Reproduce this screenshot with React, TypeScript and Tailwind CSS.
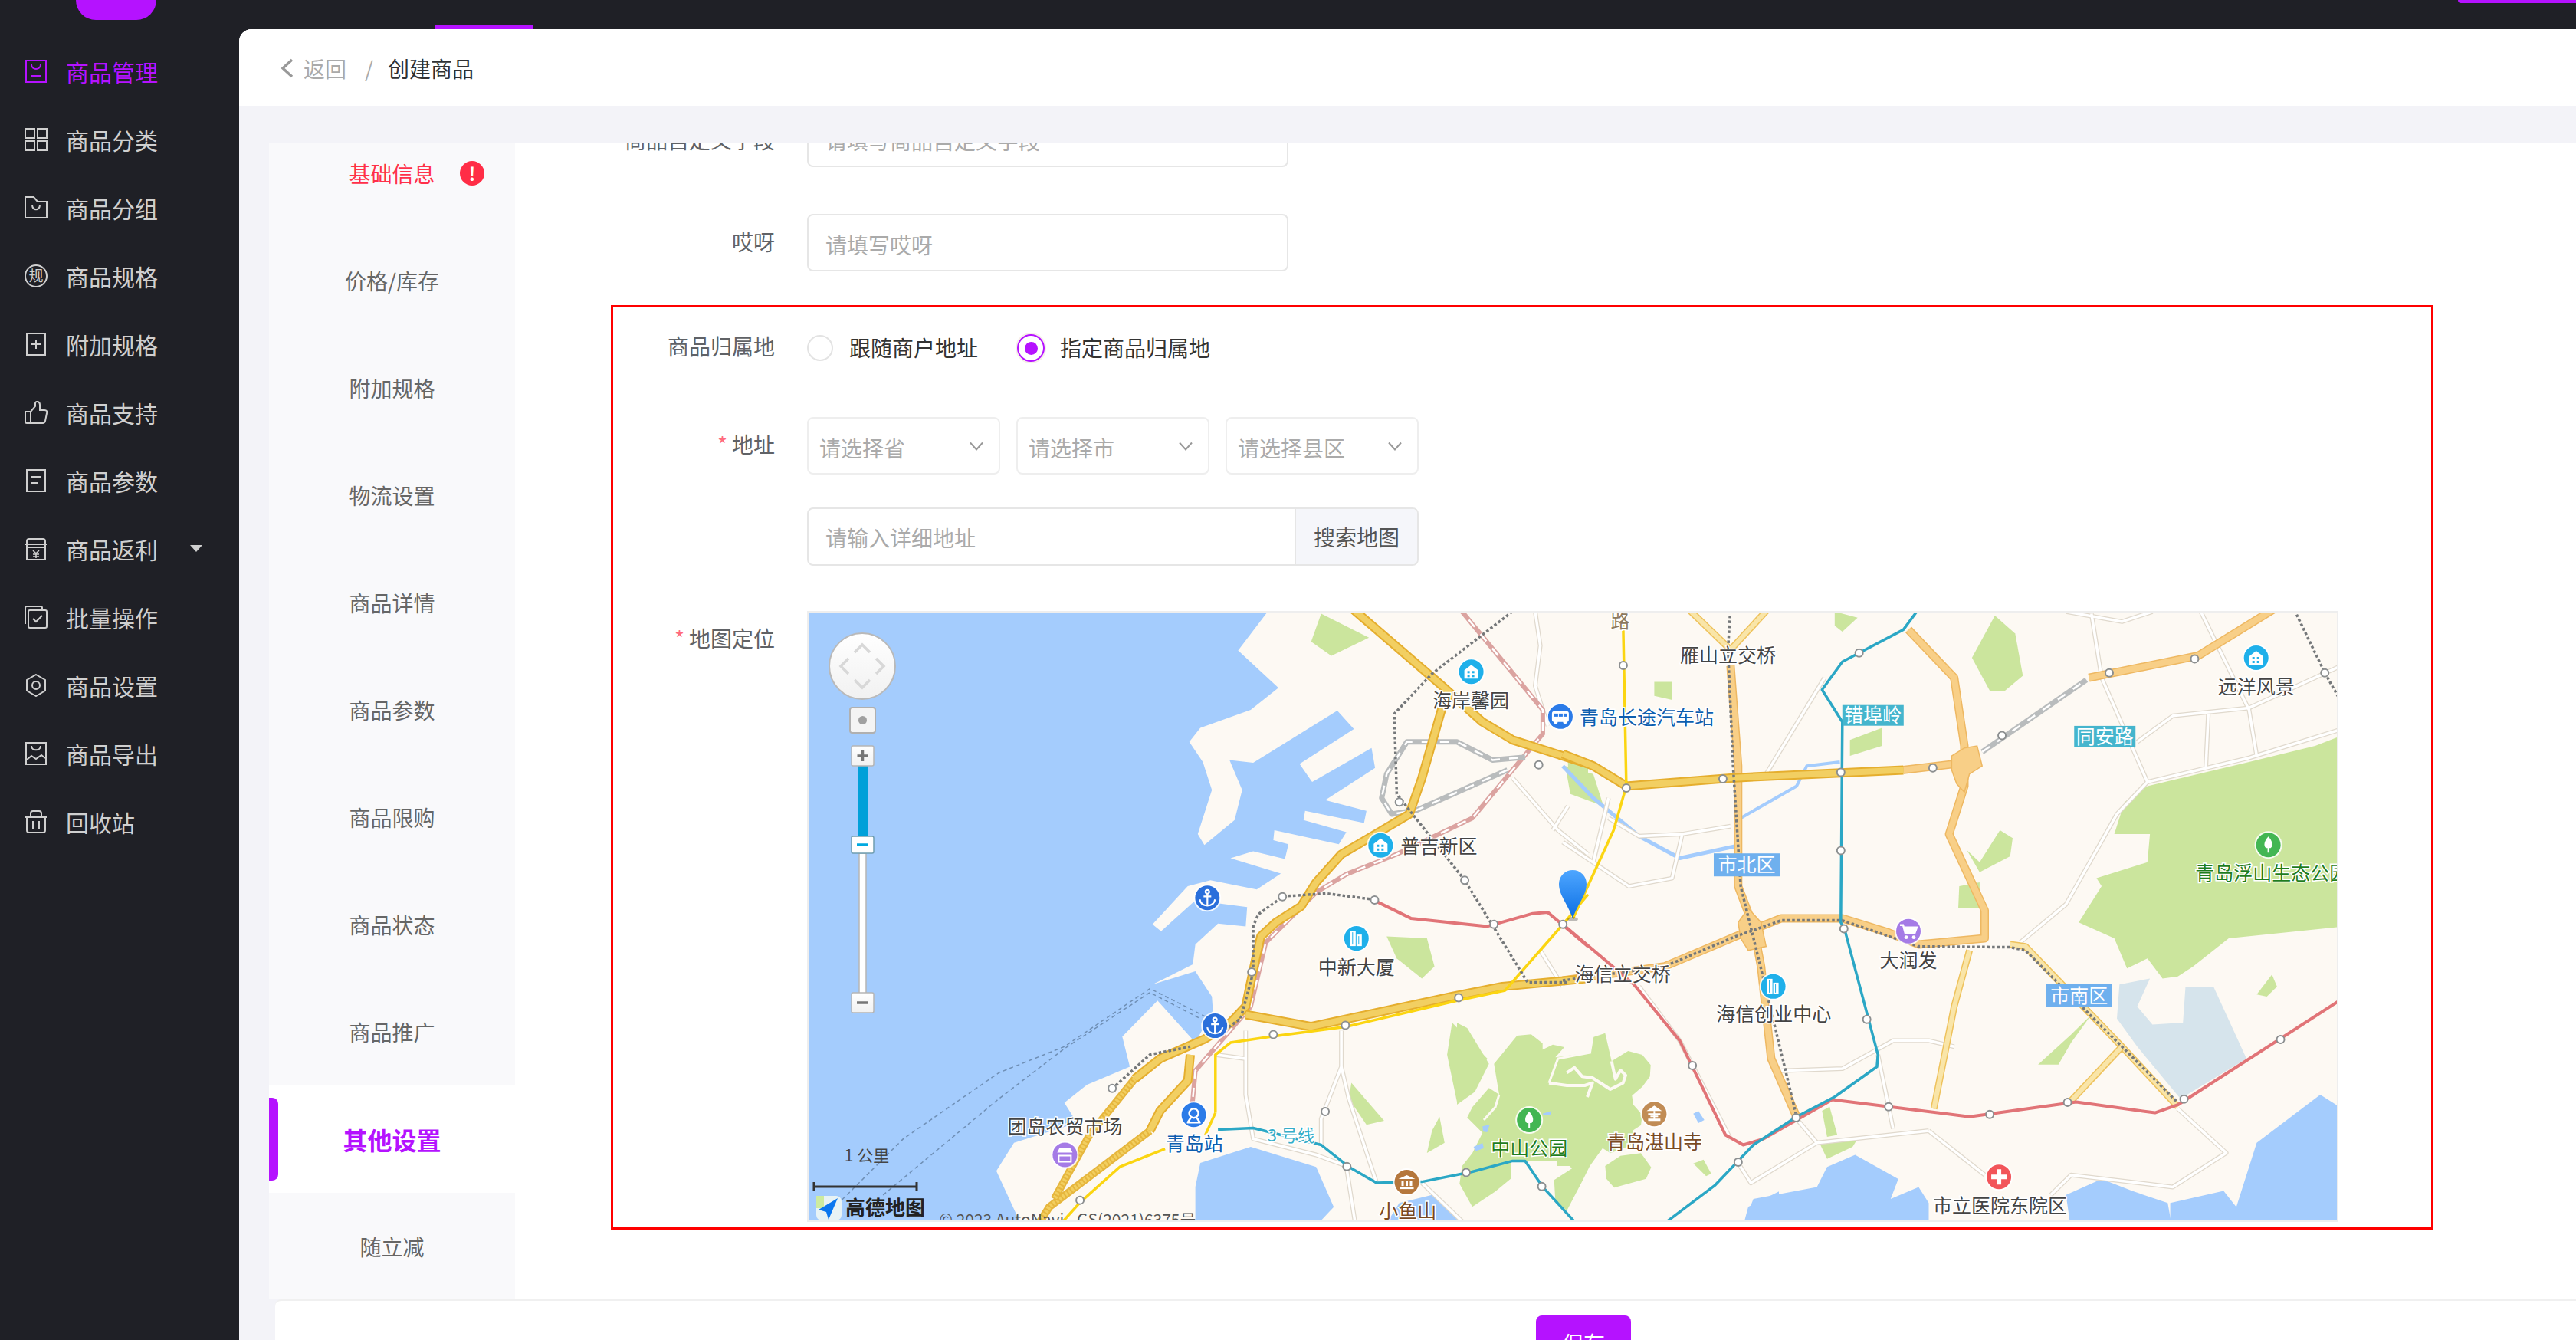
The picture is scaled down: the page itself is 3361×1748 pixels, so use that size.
import type { ReactNode } from 'react';

const MENU = [
  { label: '商品管理', icon: 'bag', active: true },
  { label: '商品分类', icon: 'grid' },
  { label: '商品分组', icon: 'folder' },
  { label: '商品规格', icon: 'spec' },
  { label: '附加规格', icon: 'plus' },
  { label: '商品支持', icon: 'thumb' },
  { label: '商品参数', icon: 'doc' },
  { label: '商品返利', icon: 'store', caret: true },
  { label: '批量操作', icon: 'check' },
  { label: '商品设置', icon: 'hex' },
  { label: '商品导出', icon: 'export' },
  { label: '回收站', icon: 'trash' },
];

const TABS = ['基础信息', '价格/库存', '附加规格', '物流设置', '商品详情', '商品参数', '商品限购', '商品状态', '商品推广', '其他设置', '随立减'];

function MenuIcon({ name }: { name: string }) {
  return (
    <svg width="30" height="30" viewBox="0 0 30 30" fill="none" stroke="currentColor" strokeWidth="2" className="shrink-0">
      {name === 'bag' && <><rect x="2" y="1" width="26" height="28" /><path d="M9 6c0 8 12 8 12 0M9 21h12" /></>}
      {name === 'grid' && <><rect x="1" y="1" width="12" height="12" /><rect x="17" y="1" width="12" height="12" /><rect x="1" y="17" width="12" height="12" /><rect x="17" y="17" width="12" height="12" /></>}
      {name === 'folder' && <><path d="M1 28V1h11l5 6h12v21z" /><path d="M10 12c1 7 9 7 10 0" /></>}
      {name === 'spec' && <><circle cx="15" cy="15" r="14" /><text x="15" y="22" textAnchor="middle" fontSize="19" fill="currentColor" stroke="none" fontFamily="'Noto Sans CJK SC',sans-serif">规</text></>}
      {name === 'plus' && <><rect x="3" y="1" width="24" height="28" /><path d="M15 9v12M9 15h12" /></>}
      {name === 'thumb' && <><path d="M1 14h7v15H3a2 2 0 0 1-2-2z" /><path d="M8 14l6-7V3c0-3 6-3 6 2v7h6c3 0 4 2 3 4l-2 10c0 2-2 3-3 3H8" /></>}
      {name === 'doc' && <><rect x="3" y="1" width="24" height="28" /><path d="M9 10h12M9 18h8" /></>}
      {name === 'store' && <><path d="M3 13V5c0-2 1-3 3-3h18c2 0 3 1 3 3v8M1 9h28" /><rect x="3" y="13" width="24" height="16" /><path d="M11 17l4 4 4-4M15 21v6M11 22h8M11 25h8" strokeWidth="1.6" /></>}
      {name === 'check' && <><path d="M1 24V3c0-1 1-2 2-2h18c1 0 2 1 2 2v2" /><rect x="5" y="6" width="24" height="23" rx="2" /><path d="M11 17l4 4 8-8" /></>}
      {name === 'hex' && <><path d="M15 1l12 7v14l-12 7-12-7V8z" /><circle cx="15" cy="15" r="5" /></>}
      {name === 'export' && <><rect x="2" y="1" width="26" height="28" /><path d="M9 5c0 7 12 7 12 0M3 23l6-5 6 4 7-5 5 4" /></>}
      {name === 'trash' && <><path d="M3 9h24v17c0 2-1 3-3 3H6c-2 0-3-1-3-3zM1 9h28M8 9V4c0-2 1-3 3-3h8c2 0 3 1 3 3v5M11 14v10M19 14v10" /></>}
    </svg>
  );
}

const conv = (s: string, fx: (x: number) => number, fy: (y: number) => number) =>
  s.split(' ').map((p) => {
    const [x, y] = p.split(',').map(Number);
    return `${fx(x).toFixed(1)},${fy(y).toFixed(1)}`;
  }).join(' ');

const lx = (x: number) => x / 1.522 - 14.5;
const rx = (x: number) => x / 1.5077 + 984;
const my = (y: number) => y / 1.912 - 9;
const zl = (s: string) => conv(s, lx, my);
const zr = (s: string) => conv(s, rx, my);
// 中山公园一带单独量的
const zc = (s: string) => conv(s, (x) => x / 3 + 846, (y) => y / 3 + 482);

const WATER = [
  zl('20,0 935,0 935,13 875,112 955,205 900,260 800,305 778,340 805,390 823,460 795,570 808,597 868,535 883,460 858,385 905,392 1072,262 1105,308 997,395 1022,440 1140,355 1147,405 1048,485 1130,512 1125,542 1008,512 1005,535 1090,565 1075,595 947,560 945,585 975,595 968,632 905,613 860,630 960,668 912,708 820,685 775,700 705,795 722,812 790,735 893,752 890,800 835,793 790,845 785,895 705,945 790,912 823,975 825,1010 790,1090 715,985 645,1075 660,1150 575,1195 530,1240 555,1290 430,1340 395,1410 450,1560 0,1560 0,0'),
  zl('800,1390 900,1350 1030,1400 1065,1500 1020,1560 790,1560 790,1450'),
  zl('1160,1560 1195,1490 1260,1470 1340,1560'),
  zr('350,1560 375,1480 500,1450 520,1400 575,1370 660,1430 645,1480 700,1450 720,1490 720,1560'),
  zr('1000,1560 990,1470 1060,1430 1120,1460 1190,1490 1200,1560'),
  zr('1195,1560 1195,1490 1300,1460 1325,1500 1365,1340 1490,1220 1540,1260 1540,1560'),
  zc('1120,955 1140,880 1260,820 1260,955'),
  zc('925,515 945,505 968,540 945,552'),
  zc('335,515 370,505 365,520 340,522'),
  zc('100,565 128,558 118,588 102,585'),
  zc('65,645 100,630 105,650 72,662'),
];

const GREEN = [
  zl('1040,20 1135,80 1060,125 1020,90'),
  zl('1170,825 1250,830 1265,900 1240,930 1190,880'),
  zl('1300,1040 1370,1130 1310,1240 1290,1120'),
  zl('1100,1190 1165,1285 1130,1295 1095,1230'),
  zl('1275,1275 1285,1340 1250,1365 1260,1310'),
  zl('1530,365 1570,395 1570,430 1530,410'),
  zc('145,320 235,210 290,205 335,240 335,265 375,245 420,255 385,295 525,275 535,215 580,200 605,310 670,270 725,285 758,325 755,370 725,410 685,445 690,480 725,520 720,560 690,580 680,640 600,670 570,650 520,720 490,780 430,895 385,855 380,775 450,730 440,720 390,720 390,700 300,700 210,700 210,770 150,820 60,880 10,790 20,720 60,670 100,590 40,530 60,490 125,415 165,440'),
  zc('580,720 640,680 720,670 760,725 740,770 615,805 585,770'),
  zc('0,160 40,180 125,320 70,430 0,480'),
  zc('925,710 965,695 995,750 975,760'),
  zr('850,25 890,70 905,175 870,212 840,212 805,130'),
  zr('535,15 580,30 550,65 535,50'),
  zr('180,190 215,190 215,235 180,225'),
  zr('565,335 628,305 628,350 565,375'),
  zr('860,560 885,580 880,625 820,665 795,610 820,640'),
  zr('780,700 820,690 820,755 778,755'),
  zr('5,400 60,420 80,500 15,470'),
  zr('1540,320 1540,800 1310,830 1280,860 1240,900 1210,925 1180,930 1150,880 1110,905 1085,830 1015,790 1060,700 1050,680 1150,640 1155,570 1085,570 1105,490 1150,450 1350,390 1480,350'),
  zr('1040,1020 1000,1090 975,1145 935,1145 1000,1070'),
  zr('1395,920 1405,950 1385,975 1365,970'),
  zr('505,1340 580,1330 570,1350 520,1380'),
  zr('510,1260 525,1250 540,1320 520,1325'),
];

const MINOR = [
  zr('1040,20 1060,180 1150,440 1350,380 1540,305'),
  zr('1255,15 1350,260 1365,375'),
  zr('1150,440 1090,520 990,745 900,840'),
  zr('1130,340 1200,275 1350,255 1540,145'),
  zr('1270,270 1265,405'),
  zr('515,180 400,420'),
  zr('0,590 130,700 215,680 235,570 330,550'),
  zr('90,480 60,640'),
  zr('90,530 150,575 235,570'),
  zr('430,1160 550,1155 650,1085 720,1085 770,1100'),
  zr('620,1120 650,1305'),
  zr('460,1280 500,1340 720,1310'),
  zr('500,1340 370,1440 345,1390'),
  zr('720,1310 830,1420'),
  zr('1210,1255 1305,1365 1200,1450 1000,1420 960,1470'),
  zr('150,950 230,1085 330,1330'),
  zr('990,15 1100,40 1160,15'),
  zl('1465,15 1475,100 1465,200 1490,300'),
  zl('1420,430 1510,560 1570,620'),
  zl('1475,860 1520,950'),
  zl('1080,1060 1080,1150 1040,1280 1040,1345'),
  zl('1080,1150 1095,1230 1150,1440'),
  zl('890,1060 890,1220 905,1330 1030,1370 1095,1400'),
  zl('830,1120 890,1130'),
  zl('1090,1400 1110,1560'),
  zl('1240,1440 1340,1560'),
  zl('1500,560 1530,500'),
];

const GOLD = [
  zl('1095,0 1280,200 1360,290 1420,335 1570,395'),
  zl('1280,255 1240,430 1215,520 1080,620 1030,690 1000,750 950,790 920,825 905,910 890,1000 860,1040 810,1080 720,1130 670,1180'),
  zl('890,1020 1020,1050 1300,975 1400,950 1570,930'),
  zl('780,1120 775,1185 720,1260 700,1310'),
  zr('0,370 60,400 125,450 330,430 670,410'),
];

const GOLD_DASH = [
  zl('700,1310 500,1500 470,1560'),
  zl('670,1180 580,1320 510,1480'),
];

const LIGHT = [
  zr('680,60 770,180 790,350 790,450 760,570 830,760 830,830 700,845 640,815 550,780 430,780 340,825 200,900 0,935'),
  zr('330,150 345,400 345,700 375,800 390,900 410,1130 460,1275'),
  zr('670,410 770,395'),
  zr('1035,180 1250,125 1410,0'),
];

const PALE = [
  zr('240,0 330,110 410,0'),
  zr('800,860 770,1000 730,1255'),
  zr('880,845 910,850 1100,1100 1210,1250'),
  zr('1000,1235 1100,1100'),
];

const DOTTED = [
  zl('1435,0 1260,170 1185,270 1190,470 1325,685 1450,940 1530,940'),
  zl('905,915 905,800 915,770 965,725 1050,718 1145,733'),
  zl('625,1205 700,1120 780,1100'),
  zl('905,915 880,1030 830,1075'),
  zr('330,0 325,110 335,400 350,700 385,880 460,1275'),
  zr('0,935 200,900 340,825 430,785 550,785 700,850 880,852 910,860 1100,1100 1210,1240'),
  zr('1435,0 1500,170 1540,260'),
];

const RAIL = [
  zl('1310,0 1480,260 1480,320 1440,380 1340,530 1190,620 1090,670 1030,715 930,840 900,1000 790,1160 780,1300'),
];

const GRAY_RAIL = [
  zl('1410,410 1230,510 1180,520 1160,480 1170,420 1210,340 1310,340 1380,385 1445,378'),
  zr('825,365 1030,185'),
];

const YELLOW = [
  zl('830,1265 830,1120 860,1090 940,1075 1090,1050 1310,985 1405,960 1520,795 1570,720'),
  zl('830,1265 810,1320'),
  zl('730,1355 640,1400 560,1490 510,1560'),
  zr('118,0 125,450 100,560 20,780'),
];

const RED = [
  zl('1145,735 1218,780 1370,800 1460,768 1490,765 1570,850'),
  zr('0,795 140,945 230,1085 320,1320 355,1345 395,1330 530,1232 800,1275 1010,1238 1165,1265 1210,1245 1540,975'),
];

const TEAL = [
  zl('835,1307 905,1303 1040,1345 1095,1400 1150,1440 1240,1437 1340,1412 1420,1385 1445,1385 1480,1450 1560,1560'),
  zr('180,1560 300,1445 375,1345 460,1275 535,1225 618,1150 620,1120 555,810 547,790 550,290 510,210 550,140 670,60 705,0'),
];

const NODES: [number, number][] = [
  [lx(1195), my(490)], [lx(1472), my(397)], [lx(1325), my(685)], [lx(1383), my(795)], [lx(1146), my(734)], [lx(963), my(726)], [lx(902), my(914)],
  [lx(1520), my(795)], [lx(1313), my(978)], [lx(1088), my(1047)], [lx(945), my(1070)], [lx(625), my(1204)], [lx(1048), my(1262)], [lx(1091), my(1399)],
  [lx(1328), my(1414)], [lx(1478), my(1449)], [lx(561), my(1483)],
  [rx(119), my(149)], [rx(583), my(118)], [rx(125), my(455)], [rx(315), my(432)], [rx(547), my(416)], [rx(728), my(405)], [rx(864), my(324)], [rx(1075), my(168)],
  [rx(1243), my(133)], [rx(1499), my(168)], [rx(547), my(611)], [rx(553), my(806)], [rx(598), my(1032)], [rx(255), my(1147)], [rx(459), my(1277)], [rx(641), my(1250)],
  [rx(840), my(1269)], [rx(993), my(1239)], [rx(1222), my(1231)], [rx(1412), my(1082)], [rx(345), my(1388)],
];

function Poly({ pts, color, width, dash }: { pts: string; color: string; width: number; dash?: string }) {
  return <polyline points={pts} fill="none" stroke={color} strokeWidth={width} strokeDasharray={dash} strokeLinejoin="round" />;
}

function MapLabel({ x, y, color = '#444', size = 25, children }: { x: number; y: number; color?: string; size?: number; children: ReactNode }) {
  return (
    <text x={x} y={y + size * 0.36} textAnchor="middle" fontSize={size} fill={color} stroke="#fff" strokeWidth="3" paintOrder="stroke" fontFamily="'Noto Sans CJK SC','Liberation Sans',sans-serif">
      {children}
    </text>
  );
}

function BoxLabel({ x, y, w, h, color, children }: { x: number; y: number; w: number; h: number; color: string; children: ReactNode }) {
  return (
    <g>
      <rect x={x} y={y} width={w} height={h} fill={color} />
      <text x={x + w / 2} y={y + h / 2 + 9} textAnchor="middle" fontSize="25" fill="#fff" fontFamily="'Noto Sans CJK SC','Liberation Sans',sans-serif">{children}</text>
    </g>
  );
}

function Poi({ x, y, color, glyph }: { x: number; y: number; color: string; glyph: string }) {
  return (
    <g transform={`translate(${x} ${y})`}>
      <circle r="18" fill="#fff" opacity="0.85" />
      <circle r="16" fill={color} />
      <g fill="#fff" stroke="none">
        {glyph === 'building' && <><path d="M-9 9V-2L0-9l9 7V9z" /><rect x="-5" y="-1" width="3" height="3" fill={color} /><rect x="1" y="-1" width="3" height="3" fill={color} /><rect x="-5" y="4" width="3" height="3" fill={color} /><rect x="1" y="4" width="3" height="3" fill={color} /></>}
        {glyph === 'tower' && <><rect x="-8" y="-10" width="7" height="20" /><rect x="0" y="-5" width="7" height="15" /><path d="M-5-8v16M3-3v11" stroke={color} strokeWidth="1" /></>}
        {glyph === 'bus' && <><rect x="-11" y="-7" width="22" height="14" rx="3" /><rect x="-8" y="-4" width="5" height="4" fill={color} /><rect x="-2" y="-4" width="5" height="4" fill={color} /><rect x="4" y="-4" width="5" height="4" fill={color} /><circle cx="-6" cy="7" r="2.5" /><circle cx="6" cy="7" r="2.5" /></>}
        {glyph === 'anchor' && <g fill="none" stroke="#fff" strokeWidth="2.2"><circle cy="-8" r="2.5" /><path d="M0-5.5V10M-5-2H5M-10 2c1 6 5 8 10 8s9-2 10-8" /></g>}
        {glyph === 'station' && <g fill="none" stroke="#fff" strokeWidth="2.4"><circle cy="-2" r="6" /><path d="M-8 10l4-6M8 10l-4-6M-9 10H9" /></g>}
        {glyph === 'market' && <><path d="M-10-3l3-6H7l3 6z" /><rect x="-8" y="-1" width="16" height="2" fill={color} /><path d="M-8 1H8v8H-8z" fill="none" stroke="#fff" strokeWidth="2" /></>}
        {glyph === 'park' && <><path d="M0-11c5 5 7 12 3 15H1v6H-1V4H-3C-7 1-5-6 0-11z" /></>}
        {glyph === 'museum' && <><path d="M-11-4L0-9l11 5z" /><rect x="-9" y="6" width="18" height="3" /><rect x="-7" y="-2" width="3" height="7" /><rect x="-1.5" y="-2" width="3" height="7" /><rect x="4" y="-2" width="3" height="7" /></>}
        {glyph === 'temple' && <><path d="M-10-4L0-11l10 7zM-8-1H8v2H-8zM-5 2H5v2H-5zM-8 6H8v3H-8z" /><rect x="-1" y="-4" width="2" height="12" /></>}
        {glyph === 'cart' && <><path d="M-11-8h4l3 11h12l3-8H-6" fill="none" stroke="#fff" strokeWidth="2.4" /><path d="M-6-5H10l-2 8H-4z" /><circle cx="-3" cy="8" r="2.4" /><circle cx="7" cy="8" r="2.4" /></>}
        {glyph === 'plus' && <path d="M-3-10h6v7h7v6H3v7h-6V3h-7v-6h7z" />}
      </g>
    </g>
  );
}

/* 地图：坐标全部换算到地图区域内 */
function MapCanvas() {
  return (
    <svg viewBox="0 0 1994 793" className="block w-full h-full" fontFamily="'Noto Sans CJK SC','Liberation Sans',sans-serif">
      <defs>
        <linearGradient id="pin" x1="0" y1="0" x2="0" y2="1">
          <stop offset="0" stopColor="#4ea6ff" />
          <stop offset="1" stopColor="#0c6fe4" />
        </linearGradient>
        <linearGradient id="knob" x1="0" y1="0" x2="0" y2="1">
          <stop offset="0" stopColor="#ffffff" />
          <stop offset="1" stopColor="#f1f1f1" />
        </linearGradient>
      </defs>
      <rect width="1994" height="793" fill="#fdf9f3" />
      <polygon points={zr('1095,945 1155,930 1130,1000 1160,1045 1220,1040 1225,950 1280,950 1345,1130 1215,1230 1130,1100 1090,1030')} fill="#d6e4ec" />
      {GREEN.map((p, i) => <polygon key={i} points={p} fill="#cbe59d" />)}
      {WATER.map((p, i) => <polygon key={i} points={p} fill="#a4ccfd" />)}
      <Poly pts={zr('0,400 60,480 150,575 230,630 340,600')} color="#a4ccfd" width={5} />
      <Poly pts={zr('350,530 460,450 480,400 545,390')} color="#a4ccfd" width={4} />

      {/* 公园里的小路 */}
      <Poly pts={zc('360,395 395,300 525,275')} color="#fdf9f3" width={3} />
      <Poly pts={zc('360,395 430,405 500,405 530,395 510,450')} color="#fdf9f3" width={4} />
      <Poly pts={zc('430,355 460,335 490,370 530,375 600,420 650,395 660,365 640,345 620,380 605,310')} color="#fdf9f3" width={4} />
      <Poly pts={zc('165,440 150,490 105,540')} color="#fdf9f3" width={3} />

      {/* 航线 */}
      <Poly pts={zl('50,1530 210,1330 400,1165 530,1100 700,955 810,1025')} color="#6f8fb5" width={1.5} dash="5 4" />
      <Poly pts={zl('170,1470 400,1230 530,1105 700,965 800,1030')} color="#6f8fb5" width={1.5} dash="5 4" />

      {MINOR.map((p, i) => <Poly key={i} pts={p} color="#e0d9cd" width={6} />)}
      {MINOR.map((p, i) => <Poly key={i} pts={p} color="#ffffff" width={3.5} />)}

      {RAIL.map((p, i) => <g key={i}><Poly pts={p} color="#dba3a0" width={6} /><Poly pts={p} color="#fff" width={2.5} dash="12 12" /></g>)}
      {GRAY_RAIL.map((p, i) => <g key={i}><Poly pts={p} color="#b9bcbd" width={7} /><Poly pts={p} color="#fff" width={2.5} dash="12 12" /></g>)}

      {PALE.map((p, i) => <g key={i}><Poly pts={p} color="#eec25c" width={9} /><Poly pts={p} color="#f9e5a8" width={6} /></g>)}
      {LIGHT.map((p, i) => <g key={i}><Poly pts={p} color="#eeb862" width={11} /><Poly pts={p} color="#f8cf87" width={8} /></g>)}
      {GOLD_DASH.map((p, i) => <g key={i}><Poly pts={p} color="#e6b63d" width={10} /><Poly pts={p} color="#f2cf5f" width={6} dash="3 2" /></g>)}
      {GOLD.map((p, i) => <g key={i}><Poly pts={p} color="#e5ae2e" width={12} /><Poly pts={p} color="#f2cf62" width={8} /></g>)}

      {/* 立交 */}
      <polygon points={zr('765,375 790,355 815,350 825,400 800,420 790,465 775,445 765,410')} fill="#f8cf87" stroke="#eeb862" strokeWidth="1.5" />
      <polygon points={zr('345,790 365,755 390,790 400,850 365,860 350,830')} fill="#f8cf87" stroke="#eeb862" strokeWidth="1.5" />

      {YELLOW.map((p, i) => <Poly key={i} pts={p} color="#fbd511" width={3.5} />)}
      {RED.map((p, i) => <Poly key={i} pts={p} color="#e17477" width={4} />)}
      {TEAL.map((p, i) => <Poly key={i} pts={p} color="#2ba7c5" width={3.5} />)}
      {DOTTED.map((p, i) => <Poly key={i} pts={p} color="#75787a" width={3.5} dash="3.5 3" />)}

      {NODES.map(([x, y], i) => <circle key={i} cx={x} cy={y} r="5" fill="#fff" stroke="#8c8f90" strokeWidth="2" />)}

      <Poi x={lx(1338)} y={my(165)} color="#1fb0ea" glyph="building" />
      <Poi x={lx(1515)} y={my(277)} color="#2b7be8" glyph="bus" />
      <Poi x={lx(1158)} y={my(598)} color="#1fb0ea" glyph="building" />
      <Poi x={lx(814)} y={my(729)} color="#2a6fdb" glyph="anchor" />
      <Poi x={lx(829)} y={my(1048)} color="#2a6fdb" glyph="anchor" />
      <Poi x={lx(1110)} y={my(830)} color="#1fb0ea" glyph="tower" />
      <Poi x={lx(787)} y={my(1270)} color="#2b7be8" glyph="station" />
      <Poi x={lx(531)} y={my(1370)} color="#a57be6" glyph="market" />
      <Poi x={lx(1453)} y={my(1283)} color="#43b653" glyph="park" />
      <Poi x={lx(1210)} y={my(1438)} color="#b5773c" glyph="museum" />
      <Poi x={rx(1364)} y={my(130)} color="#1fb0ea" glyph="building" />
      <Poi x={rx(1388)} y={my(597)} color="#43b653" glyph="park" />
      <Poi x={rx(414)} y={my(950)} color="#1fb0ea" glyph="tower" />
      <Poi x={rx(680)} y={my(812)} color="#a57be6" glyph="cart" />
      <Poi x={rx(180)} y={my(1268)} color="#c18c55" glyph="temple" />
      <Poi x={rx(858)} y={my(1425)} color="#f2555a" glyph="plus" />

      <MapLabel x={lx(1337)} y={my(238)}>海岸馨园</MapLabel>
      <MapLabel x={lx(1274)} y={my(600)}>普吉新区</MapLabel>
      <MapLabel x={lx(1110)} y={my(903)}>中新大厦</MapLabel>
      <MapLabel x={lx(531)} y={my(1300)}>团岛农贸市场</MapLabel>
      <MapLabel x={lx(788)} y={my(1342)} color="#0d5eaf">青岛站</MapLabel>
      <MapLabel x={lx(980)} y={my(1322)} color="#35aec9" size={22}>3 号线</MapLabel>
      <MapLabel x={lx(1453)} y={my(1353)} color="#1e7d1e">中山公园</MapLabel>
      <MapLabel x={lx(1212)} y={my(1510)} color="#7a4a1f">小鱼山</MapLabel>
      <MapLabel x={rx(113)} y={my(38)} color="#8c7a5f">路</MapLabel>
      <MapLabel x={rx(325)} y={my(125)}>雁山立交桥</MapLabel>
      <MapLabel x={rx(165)} y={my(280)} color="#0d5eaf">青岛长途汽车站</MapLabel>
      <MapLabel x={rx(1364)} y={my(203)}>远洋风景</MapLabel>
      <MapLabel x={rx(118)} y={my(920)}>海信立交桥</MapLabel>
      <MapLabel x={rx(415)} y={my(1020)}>海信创业中心</MapLabel>
      <MapLabel x={rx(680)} y={my(885)}>大润发</MapLabel>
      <MapLabel x={rx(1395)} y={my(668)} color="#1e7d1e">青岛浮山生态公园</MapLabel>
      <MapLabel x={rx(180)} y={my(1338)} color="#7a4a1f">青岛湛山寺</MapLabel>
      <MapLabel x={rx(860)} y={my(1497)}>市立医院东院区</MapLabel>

      <BoxLabel x={rx(550)} y={my(248)} w={80} h={27} color="#45b5cd">错埠岭</BoxLabel>
      <BoxLabel x={rx(1006)} y={my(300)} w={80} h={28} color="#45b5cd">同安路</BoxLabel>
      <BoxLabel x={rx(297)} y={my(618)} w={86} h={30} color="#6fb0ee">市北区</BoxLabel>
      <BoxLabel x={rx(951)} y={my(944)} w={86} h={30} color="#6fb0ee">市南区</BoxLabel>

      {/* 定位点 */}
      <ellipse cx="997" cy="400" rx="7" ry="3" fill="#000" opacity="0.25" />
      <path d="M997 399C990 379 979 369 979 354a18 18 0 0 1 36 0C1015 369 1004 379 997 399z" fill="url(#pin)" />

      {/* 比例尺 + logo */}
      <text x="76" y="716" textAnchor="middle" fontSize="21" fill="#444">1 公里</text>
      <path d="M7 743v11M7 749H141M141 743v11" stroke="#333" strokeWidth="3" fill="none" />
      <rect x="10" y="761" width="33" height="32" rx="7" fill="#e8f3f5" />
      <rect x="10" y="761" width="10" height="16" fill="#cdeb9f" />
      <path d="M38 764L13 779l10 3 3 10z" fill="#0b77ef" />
      <text x="100" y="786" textAnchor="middle" fontSize="26" fontWeight="700" fill="#222">高德地图</text>
      <text x="338" y="800" textAnchor="middle" fontSize="21" fill="#555">© 2023 AutoNavi - GS(2021)6375号</text>

      {/* 地图控件 */}
      <circle cx="70" cy="70" r="43" fill="url(#knob)" stroke="#b9b9b9" strokeWidth="2" />
      <path d="M60 52l10-10 10 10M60 88l10 10 10-10M52 60L42 70l10 10M88 60l10 10-10 10" fill="none" stroke="#d8d8d8" strokeWidth="3.5" />
      <rect x="54" y="124" width="33" height="33" rx="3" fill="#f4f4f4" stroke="#b0b0b0" strokeWidth="2" />
      <circle cx="70.5" cy="140.5" r="5.5" fill="#a0a0a0" />
      <rect x="66" y="314" width="9" height="184" fill="#fff" stroke="#b5b5b5" strokeWidth="1.5" />
      <rect x="65" y="200" width="12" height="92" fill="#00a0d9" />
      <rect x="56" y="174" width="29" height="26" rx="2" fill="url(#knob)" stroke="#b5b5b5" strokeWidth="1.5" />
      <path d="M70.5 180v14M63.5 187h14" stroke="#777" strokeWidth="3.5" />
      <rect x="56" y="292" width="29" height="22" rx="2" fill="#fff" stroke="#6f9db0" strokeWidth="1.5" />
      <path d="M63 303h15" stroke="#00a9e0" strokeWidth="3.5" />
      <rect x="56" y="496" width="29" height="26" rx="2" fill="url(#knob)" stroke="#b5b5b5" strokeWidth="1.5" />
      <path d="M63 509h15" stroke="#777" strokeWidth="3.5" />
    </svg>
  );
}

function Field({ text, className }: { text: string; className: string }) {
  return (
    <div className={`h-[75px] border-2 border-[#e6e6e6] rounded-[8px] bg-white flex items-center text-[#aaaaaa] pt-[4px] ${className}`}>
      {text}
    </div>
  );
}

function Select({ text }: { text: string }) {
  return (
    <div className="w-[252px] h-[75px] border-2 border-[#eeeeee] rounded-[8px] bg-white flex items-center justify-between pl-[14px] pr-[20px] text-[#aaaaaa]">
      <span className="pt-[5px]">{text}</span>
      <svg width="18" height="12" viewBox="0 0 18 12" fill="none" stroke="#999" strokeWidth="2"><path d="M1 1.5l8 9 8-9" /></svg>
    </div>
  );
}

export default function App() {
  return (
    <div className="w-[3361px] h-[1748px] flex overflow-hidden bg-[#1f2026] text-[28px] font-['Noto_Sans_CJK_SC','Liberation_Sans',sans-serif]">
      {/* 左侧菜单 */}
      <aside className="w-[312px] shrink-0 relative">
        <div className="h-[48px]">
          <div className="ml-[99px] w-[105px] h-[26px] rounded-b-[42px] bg-[#b512ff]" />
        </div>
        {MENU.map((m) => (
          <div key={m.label} className={`h-[89px] flex items-center pl-[32px] gap-[24px] ${m.active ? 'text-[#b512ff]' : 'text-[#cfcfcf]'}`}>
            <MenuIcon name={m.icon} />
            <span className="text-[30px] leading-none">{m.label}</span>
            {m.caret && <span className="ml-[18px] w-0 h-0 border-x-[8px] border-x-transparent border-t-[9px] border-t-[#cfcfcf]" />}
          </div>
        ))}
      </aside>

      <div className="flex-1 flex flex-col min-w-0">
        {/* 顶部 */}
        <div className="h-[38px] shrink-0 flex items-start justify-between">
          <div className="ml-[256px] mt-[32px] w-[127px] h-[6px] bg-[#b512ff]" />
          <div className="w-[154px] h-[4px] rounded-bl-[4px] bg-[#b512ff]" />
        </div>

        <div className="flex-1 min-h-0 flex flex-col bg-[#f3f3f8] rounded-tl-[16px] overflow-hidden">
          {/* 面包屑 */}
          <div className="h-[100px] shrink-0 bg-white flex items-center pl-[54px] pt-[2px]">
            <svg width="17" height="26" viewBox="0 0 17 26" fill="none" stroke="#999" strokeWidth="3.5"><path d="M15 2L3 13l12 11" /></svg>
            <span className="ml-[13px] text-[#aaaaaa]">返回</span>
            <span className="ml-[24px] text-[#aaaaaa]">/</span>
            <span className="ml-[19px] text-[#303133]">创建商品</span>
          </div>

          <div className="flex-1 min-h-0 mt-[48px] ml-[39px] flex flex-col">
            <div className="flex-1 min-h-0 flex bg-white">
              {/* 表单分区 tab */}
              <div className="w-[321px] shrink-0 bg-[#f9f9fb] overflow-hidden">
                <div className="-mt-[30px]">
                  {TABS.map((t, i) => (
                    <div key={t} className={`h-[140px] flex items-center justify-center relative ${i === 9 ? 'bg-white text-[#b512ff] font-bold text-[32px]' : i === 0 ? 'text-[#ff3049]' : 'text-[#666666]'}`}>
                      {t}
                      {i === 9 && <span className="absolute left-0 top-[16px] w-[12px] h-[108px] rounded-r-[8px] bg-[#b512ff]" />}
                      {i === 0 && <span className="absolute left-[249px] top-[54px] w-[32px] h-[32px] rounded-full bg-[#ff2d46] text-white text-[24px] leading-[32px] font-bold text-center">!</span>}
                    </div>
                  ))}
                </div>
              </div>

              {/* 表单 */}
              <div className="flex-1 min-w-0 overflow-hidden">
                <div className="-mt-[43px] ml-[125px]">
                  <div className="flex">
                    <div className="w-[214px] text-right text-[#606266] pt-[18px]">商品自定义字段</div>
                    <Field text="请填写商品自定义字段" className="ml-[42px] w-[628px] pl-[22px]" />
                  </div>
                  <div className="flex mt-[61px]">
                    <div className="w-[214px] text-right text-[#606266] pt-[15px]">哎呀</div>
                    <Field text="请填写哎呀" className="ml-[42px] w-[628px] pl-[22px]" />
                  </div>

                  <div className="mt-[44px] w-[2378px] h-[1206px] border-[3px] border-[#ff0000] pt-[35px]">
                    <div className="flex h-[36px] items-center">
                      <div className="w-[211px] text-right text-[#606266] -mt-[7px]">商品归属地</div>
                      <div className="ml-[42px] flex items-center">
                        <span className="w-[34px] h-[34px] rounded-full border-2 border-[#e3e3e3]" />
                        <span className="ml-[21px] text-[#333333] -mt-[2px]">跟随商户地址</span>
                        <span className="ml-[51px] w-[36px] h-[36px] rounded-full border-2 border-[#b512ff] flex items-center justify-center ring-2 ring-[#f7efe9]">
                          <span className="w-[17px] h-[17px] rounded-full bg-[#b512ff]" />
                        </span>
                        <span className="ml-[20px] text-[#333333] -mt-[2px]">指定商品归属地</span>
                      </div>
                    </div>

                    <div className="flex mt-[72px]">
                      <div className="w-[211px] text-right text-[#606266] pt-[14px]"><span className="text-[#ff6b7d] mr-[6px]">*</span>地址</div>
                      <div className="ml-[42px] flex gap-[21px]">
                        <Select text="请选择省" />
                        <Select text="请选择市" />
                        <Select text="请选择县区" />
                      </div>
                    </div>

                    <div className="flex mt-[43px] ml-[253px] w-[798px] h-[76px] border-2 border-[#e6e6e6] rounded-[8px] overflow-hidden">
                      <div className="w-[634px] flex items-center pl-[22px] pt-[2px] text-[#aaaaaa]">请输入详细地址</div>
                      <div className="flex-1 border-l-2 border-[#e6e6e6] bg-[#f5f6fa] flex items-center justify-center text-[#555555]">搜索地图</div>
                    </div>

                    <div className="flex mt-[59px]">
                      <div className="w-[211px] text-right text-[#606266] pt-[14px]"><span className="text-[#ff6b7d] mr-[6px]">*</span>地图定位</div>
                      <div className="ml-[42px] w-[1998px] h-[797px] border-2 border-[#eeeeee] overflow-hidden">
                        <MapCanvas />
                      </div>
                    </div>
                  </div>
                </div>
              </div>
            </div>

            {/* 底部按钮 */}
            <div className="h-[53px] shrink-0 ml-[8px] bg-white border-t-2 border-[#f0f0f0] rounded-tl-[8px] overflow-hidden">
              <div className="w-[124px] h-[72px] mt-[19px] ml-[1645px] rounded-[8px] bg-[#b512ff] text-white flex items-center justify-center">保存</div>
            </div>
          </div>
        </div>
      </div>
    </div>
  );
}
